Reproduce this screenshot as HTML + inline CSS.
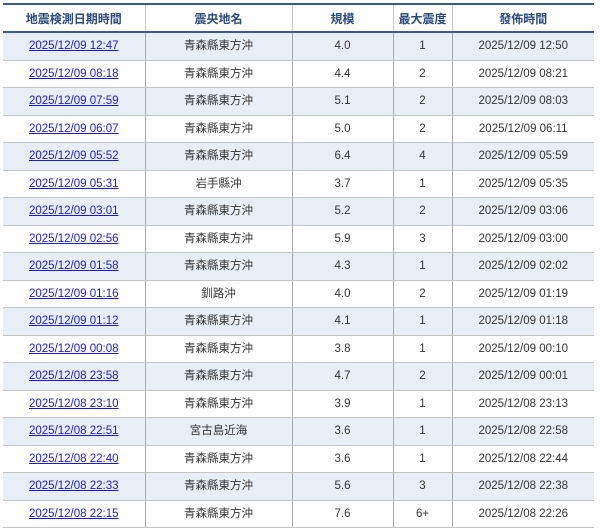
<!DOCTYPE html><html><head><meta charset="utf-8"><style>
body{margin:0;background:#fff;font-family:"Liberation Sans","Noto Sans CJK JP",sans-serif;}
table{position:absolute;left:3px;top:3px;width:591px;border-collapse:collapse;table-layout:fixed;}
th{height:26px;color:#2b4a7e;font-size:12px;font-weight:bold;border-top:2px solid #3d5a8f;border-bottom:2px solid #3d5a8f;border-left:1px solid #c8c8c8;padding:0;}
td{height:26.5px;font-size:11.5px;line-height:14px;color:#333;text-align:center;border-bottom:1px solid #c4c4c4;border-left:1px solid #aaa;padding:0;}
th:first-child,td:first-child{border-left:none}
tr:nth-child(odd) td{background:#e8eef6}
a{color:#1a1ad0;text-decoration:underline}
</style></head><body><table>
<colgroup><col style="width:142px"><col style="width:147px"><col style="width:101px"><col style="width:59px"><col style="width:142px"></colgroup>
<thead><tr><th>地震検測日期時間</th><th>震央地名</th><th>規模</th><th>最大震度</th><th>發佈時間</th></tr></thead>
<tbody>
<tr><td><a>2025/12/09 12:47</a></td><td>青森縣東方沖</td><td>4.0</td><td>1</td><td>2025/12/09 12:50</td></tr>
<tr><td><a>2025/12/09 08:18</a></td><td>青森縣東方沖</td><td>4.4</td><td>2</td><td>2025/12/09 08:21</td></tr>
<tr><td><a>2025/12/09 07:59</a></td><td>青森縣東方沖</td><td>5.1</td><td>2</td><td>2025/12/09 08:03</td></tr>
<tr><td><a>2025/12/09 06:07</a></td><td>青森縣東方沖</td><td>5.0</td><td>2</td><td>2025/12/09 06:11</td></tr>
<tr><td><a>2025/12/09 05:52</a></td><td>青森縣東方沖</td><td>6.4</td><td>4</td><td>2025/12/09 05:59</td></tr>
<tr><td><a>2025/12/09 05:31</a></td><td>岩手縣沖</td><td>3.7</td><td>1</td><td>2025/12/09 05:35</td></tr>
<tr><td><a>2025/12/09 03:01</a></td><td>青森縣東方沖</td><td>5.2</td><td>2</td><td>2025/12/09 03:06</td></tr>
<tr><td><a>2025/12/09 02:56</a></td><td>青森縣東方沖</td><td>5.9</td><td>3</td><td>2025/12/09 03:00</td></tr>
<tr><td><a>2025/12/09 01:58</a></td><td>青森縣東方沖</td><td>4.3</td><td>1</td><td>2025/12/09 02:02</td></tr>
<tr><td><a>2025/12/09 01:16</a></td><td>釧路沖</td><td>4.0</td><td>2</td><td>2025/12/09 01:19</td></tr>
<tr><td><a>2025/12/09 01:12</a></td><td>青森縣東方沖</td><td>4.1</td><td>1</td><td>2025/12/09 01:18</td></tr>
<tr><td><a>2025/12/09 00:08</a></td><td>青森縣東方沖</td><td>3.8</td><td>1</td><td>2025/12/09 00:10</td></tr>
<tr><td><a>2025/12/08 23:58</a></td><td>青森縣東方沖</td><td>4.7</td><td>2</td><td>2025/12/09 00:01</td></tr>
<tr><td><a>2025/12/08 23:10</a></td><td>青森縣東方沖</td><td>3.9</td><td>1</td><td>2025/12/08 23:13</td></tr>
<tr><td><a>2025/12/08 22:51</a></td><td>宮古島近海</td><td>3.6</td><td>1</td><td>2025/12/08 22:58</td></tr>
<tr><td><a>2025/12/08 22:40</a></td><td>青森縣東方沖</td><td>3.6</td><td>1</td><td>2025/12/08 22:44</td></tr>
<tr><td><a>2025/12/08 22:33</a></td><td>青森縣東方沖</td><td>5.6</td><td>3</td><td>2025/12/08 22:38</td></tr>
<tr><td><a>2025/12/08 22:15</a></td><td>青森縣東方沖</td><td>7.6</td><td>6+</td><td>2025/12/08 22:26</td></tr>
</tbody></table></body></html>
